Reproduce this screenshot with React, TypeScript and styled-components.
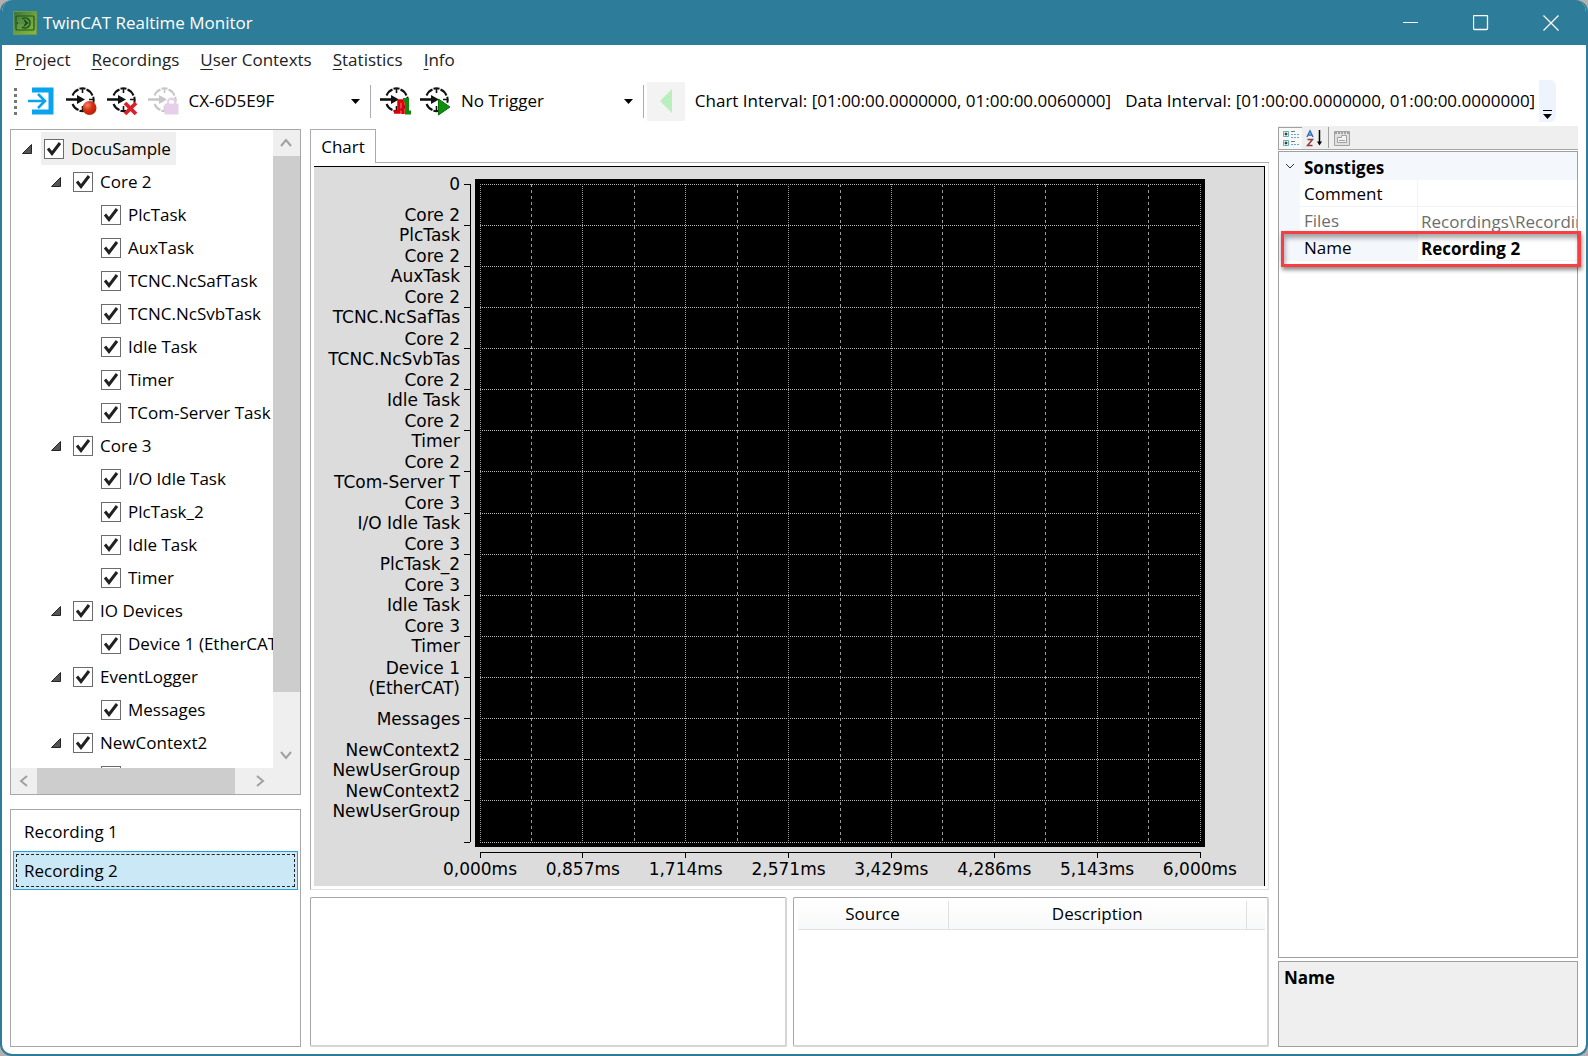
import React, { useState } from "react";
import styled, { createGlobalStyle, css } from "styled-components";

const Global = createGlobalStyle`
  * { box-sizing: border-box; }
  html, body, #root { height: 100%; margin: 0; }
  body { background: #b4b0b0; overflow: hidden; }
  body, button, input, select, table {
    font-family: "Open Sans", "Noto Sans", sans-serif;
    font-size: 17px;
    line-height: 24px;
    color: #000;
  }
  button { background: none; border: 0; padding: 0; }
`;

const Window = styled.div`
  height: 100%;
  display: flex;
  flex-direction: column;
  background: #fff;
  border: 2px solid #2d7c99;
  border-top: 0;
  border-radius: 12px;
  overflow: hidden;
`;

const TitleBar = styled.header`
  flex: none;
  height: 45px;
  display: flex;
  align-items: center;
  gap: 6px;
  padding-left: 11px;
  background: #2d7c99;
  color: #fff;
`;

const Title = styled.h1`
  flex: 1;
  margin: 0;
  font-size: 17px;
  font-weight: 400;
`;

const WindowControls = styled.div`
  display: flex;
`;

const WindowButton = styled.button`
  width: 70px;
  height: 45px;
  display: grid;
  place-items: center;
`;

const MenuBar = styled.nav`
  flex: none;
  height: 30px;
  display: flex;
  align-items: center;
  gap: 21px;
  padding: 0 13px;
`;

const MenuItem = styled.button`
  color: #222;
  u { text-underline-offset: 3px; text-decoration-thickness: 1px; }
`;

const Toolbar = styled.div`
  flex: none;
  height: 51px;
  display: flex;
  align-items: center;
  padding: 1px 30px 0 12px;
`;

const Grip = styled.span`
  width: 3px;
  height: 27px;
  margin-right: 4px;
  background: repeating-linear-gradient(#777 0 3px, transparent 3px 6px);
`;

const ToolButton = styled.button`
  width: 41px;
  height: 40px;
  display: grid;
  place-items: center;
`;

const Separator = styled.span<{ $gap: number }>`
  width: 1px;
  height: 33px;
  margin-right: ${(p) => p.$gap}px;
  background: #a8acb8;
`;

const SelectBox = styled.div<{ $width: number }>`
  display: grid;
  align-items: center;
  width: ${(p) => p.$width}px;
  margin-left: 1px;
  > * { grid-area: 1 / 1; }
  svg { justify-self: end; margin-right: 10px; pointer-events: none; }
`;

const Select = styled.select`
  appearance: none;
  width: 100%;
  height: 38px;
  padding: 0 22px 0 4px;
  border: 0;
  background: transparent;
`;

const BackButton = styled.button`
  width: 38px;
  height: 39px;
  display: grid;
  place-items: center;
  background: #f3f3f3;
`;

const Interval = styled.span`
  margin-left: 10px;
  margin-right: 4px;
  white-space: nowrap;
`;

const Overflow = styled.button`
  width: 17px;
  height: 42px;
  margin-left: auto;
  display: flex;
  align-items: flex-end;
  justify-content: center;
  padding-bottom: 3px;
  background: #edf4fd;
  border-radius: 0 6px 6px 0;
`;

const Body = styled.main`
  flex: 1;
  min-height: 0;
  display: grid;
  grid-template-columns: 291px minmax(0, 1fr) 300px;
  gap: 9px;
  padding: 0 8px 7px;
`;

const Column = styled.div<{ $gap: number }>`
  min-height: 0;
  min-width: 0;
  display: flex;
  flex-direction: column;
  gap: ${(p) => p.$gap}px;
  padding-top: 3px;
`;

const TreePanel = styled.section`
  flex: 1;
  min-height: 0;
  display: grid;
  grid-template: minmax(0, 1fr) 26px / minmax(0, 1fr) 27px;
  border: 1px solid #a5a7aa;
  background: #fff;
`;

const Tree = styled.ul`
  margin: 0;
  padding: 2px 0 0 5px;
  list-style: none;
  overflow: hidden;
`;

const Node = styled.li<{ $depth: number }>`
  height: 33px;
  display: flex;
  align-items: center;
  padding-left: ${(p) => p.$depth * 28 + (p.$depth ? 1 : 0)}px;
`;

const Expander = styled.button`
  flex: none;
  width: 22px;
  height: 24px;
  display: flex;
  align-items: center;
  justify-content: center;
`;

const NodeLabel = styled.label<{ $selected: boolean }>`
  height: 33px;
  display: flex;
  align-items: center;
  gap: 7px;
  margin-left: 3px;
  padding: 0 5px 0 3px;
  white-space: nowrap;
  background: ${(p) => (p.$selected ? "#efefef" : "transparent")};
`;

const CheckBox = styled.span`
  display: grid;
  width: 20px;
  height: 20px;
  > * { grid-area: 1 / 1; }
  svg { pointer-events: none; z-index: 1; }
  input {
    appearance: none;
    width: 20px;
    height: 20px;
    margin: 0;
    border: 1px solid #6c6c6c;
    background: #fff;
  }
  input:not(:checked) + svg { visibility: hidden; }
`;

const Scroll = styled.div<{ $horizontal?: boolean }>`
  display: flex;
  flex-direction: ${(p) => (p.$horizontal ? "row" : "column")};
  background: #efefef;
`;

const ScrollButton = styled.button`
  flex: none;
  width: 26px;
  height: 26px;
  display: grid;
  place-items: center;
`;

const Thumb = styled.span<{ $grow: number }>`
  flex: ${(p) => p.$grow} 0 0;
  background: #cdcdcd;
`;

const Track = styled.span<{ $grow: number }>`
  flex: ${(p) => p.$grow} 0 0;
`;

const ScrollCorner = styled.span`
  background: #efefef;
`;

const Recordings = styled.ul`
  flex: none;
  height: 238px;
  margin: 0;
  padding: 2px;
  list-style: none;
  border: 1px solid #a5a7aa;
`;

const RecordingItem = styled.button<{ $selected: boolean }>`
  width: 100%;
  height: 39px;
  padding: 2px;
  display: flex;
  border: 1px solid transparent;
  ${(p) =>
    p.$selected &&
    css`
      background: #cbe8f6;
      border-color: #26a0da;
    `}
`;

const FocusFrame = styled.span<{ $visible: boolean }>`
  flex: 1;
  height: 33px;
  padding: 4px 0 0 7px;
  text-align: left;
  border: 1px ${(p) => (p.$visible ? "dashed #222" : "solid transparent")};
`;

const ChartSection = styled.section`
  flex: 1;
  min-height: 0;
  display: flex;
  flex-direction: column;
`;

const TabRow = styled.div`
  flex: none;
  height: 34px;
  display: flex;
  &::after {
    content: "";
    flex: 1;
    border-bottom: 1px solid #acacac;
  }
`;

const Tab = styled.button`
  width: 66px;
  border: 1px solid #acacac;
  border-bottom: 0;
  background: #fff;
`;

const TabPane = styled.div`
  flex: 1;
  min-height: 0;
  padding: 3px;
  display: flex;
  border: 1px solid #e3e3e3;
  border-left-color: #acacac;
  border-top: 0;
`;

const Chart = styled.div`
  flex: 1;
  display: grid;
  grid-template: 12px minmax(0, 1fr) 39px / 161px minmax(0, 1fr) 59px;
  background: #dcdcdc;
  border-top: 1px solid #000;
  border-right: 1px solid #000;
  font-family: "DejaVu Sans", sans-serif;
  font-size: 17px;
  line-height: 20px;
`;

const YAxis = styled.div`
  grid-area: 2 / 1;
  display: grid;
  grid-template-columns: minmax(0, 1fr) 6px;
  gap: 4px;
  padding: 5px 5px 5px 0;
`;

const YLabels = styled.div`
  display: flex;
  flex-direction: column;
`;

const YSlot = styled.div`
  flex: 1 1 0;
`;

const YLabel = styled.div`
  height: 0;
  display: flex;
  align-items: center;
  justify-content: flex-end;
  text-align: right;
  white-space: pre;
`;

const Drawing = styled.svg`
  display: block;
  width: 100%;
  height: 100%;
  overflow: visible;
  shape-rendering: crispEdges;
`;

const Plot = styled.div`
  grid-area: 2 / 2;
  padding: 5px;
  background: #000;
`;

const XAxis = styled.div`
  grid-area: 3 / 2;
  padding: 5px 5px 0;
  display: grid;
  grid-template-rows: 6px 20px;
  row-gap: 1px;
`;

const XLabels = styled.div`
  display: flex;
  justify-content: space-between;
`;

const XLabel = styled.span`
  width: 0;
  display: flex;
  justify-content: center;
`;

const BottomRow = styled.div`
  flex: none;
  height: 150px;
  display: grid;
  grid-template-columns: 1fr 1fr;
  gap: 6px;
`;

const Panel = styled.section`
  padding: 3px 2px 0 4px;
  border: 2px solid #d5d5d5;
  border-top: 1px solid #a5a7aa;
  border-left: 1px solid #a5a7aa;
  border-radius: 2px;
`;

const EventTable = styled.table`
  width: 100%;
  table-layout: fixed;
  border-collapse: separate;
  border-spacing: 0;
  th, td {
    height: 29px;
    padding: 0 0 2px;
    font-weight: 400;
    background: linear-gradient(#fff, #f7f8f9);
    border-bottom: 1px solid #e3e4e6;
  }
  th { border-right: 1px solid #dfe0e2; }
`;

const PropertyTools = styled.div`
  flex: none;
  height: 24px;
  margin-bottom: 1px;
  display: flex;
  align-items: center;
  background: #efefef;
  border-bottom: 1px solid #a5a5a5;
`;

const PropertyTool = styled.button<{ $pressed?: boolean }>`
  width: 24px;
  height: 22px;
  display: grid;
  place-items: center;
  ${(p) =>
    p.$pressed &&
    css`
      background: #f8f8f8;
      border-left: 1px solid #a0a0a0;
      border-top: 1px solid #a0a0a0;
    `}
`;

const ToolDivider = styled.span`
  width: 1px;
  height: 21px;
  margin: 0 1px 0 2px;
  background: #a0a0a0;
`;

const PropertyColumn = styled.aside`
  min-height: 0;
  min-width: 0;
  display: flex;
  flex-direction: column;
`;

const PropertyBox = styled.div`
  flex: 1;
  min-height: 0;
  border: 1px solid #a0a0a0;
  background: #fff;
`;

const PropertyTable = styled.table`
  width: 100%;
  table-layout: fixed;
  border-collapse: separate;
  border-spacing: 0;
  th, td { height: 27px; padding: 0; text-align: left; font-weight: 400; }
`;

const GroupRow = styled.tr`
  background: #f4f7fc;
  th:last-child { font-weight: 700; padding: 4px 0 0 4px; }
`;

const Gutter = styled.td`
  background: #f4f7fc;
`;

const PropertyName = styled.th<{ $selected?: boolean; $muted?: boolean }>`
  && { padding: 2px 0 0 4px; }
  color: ${(p) => (p.$muted ? "#6d6d6d" : "#000")};
  background: ${(p) => (p.$selected ? "#f4f7fc" : "#fff")};
  border-right: 1px solid #f0f3fa;
  border-bottom: 1px solid #f0f3fa;
`;

const PropertyValue = styled.td`
  border-bottom: 1px solid #f0f3fa;
`;

const ValueInput = styled.input<{ $bold?: boolean }>`
  display: block;
  width: 100%;
  height: 26px;
  padding: 2px 0 0 3px;
  border: 0;
  outline: 0;
  background: transparent;
  font-weight: ${(p) => (p.$bold ? 700 : 400)};
  &:read-only { color: #6d6d6d; }
`;

const SelectedRow = styled.tr`
  position: relative;
`;

const Highlight = styled.span`
  position: absolute;
  top: -3px;
  left: 2px;
  right: -4px;
  bottom: -6px;
  border: 3px solid #f73e42;
  box-shadow: 1px 3px 4px rgba(0, 0, 0, 0.45), inset 1px 4px 5px rgba(0, 0, 0, 0.35);
  pointer-events: none;
`;

const Help = styled.div`
  flex: none;
  height: 86px;
  margin-top: 3px;
  padding: 4px 5px;
  border: 1px solid #a0a0a0;
  background: #efefef;
  font-weight: 700;
`;

const AppIcon = () => (
  <svg width="24" height="24" viewBox="0 0 24 24" fill="none">
    <defs>
      <linearGradient id="leaf" x1="0" y1="0" x2="1" y2="1">
        <stop offset="0" stopColor="#3c7038" />
        <stop offset=".5" stopColor="#69a038" />
        <stop offset="1" stopColor="#8aba3c" />
      </linearGradient>
    </defs>
    <rect x=".5" y=".5" width="23" height="23" fill="url(#leaf)" stroke="#6f9a4a" />
    <rect x="3" y="5" width="18" height="14" rx="1" stroke="#1c5425" strokeWidth="1.2" />
    <path d="M9 8a5 5 0 1 1 0 8" stroke="#1c5425" strokeWidth="1.6" />
    <path d="M4 12h10M11 9l3.500 3-3.500 3" stroke="#1c5425" strokeWidth="1.8" />
    <path d="M5 12h7" stroke="#b5d694" strokeWidth=".8" />
  </svg>
);

const LoginIcon = () => (
  <svg width="28" height="28" viewBox="0 0 28 28" fill="none" stroke="#0aa3ee">
    <path d="M5 3h19v22H5" strokeWidth="5" />
    <path d="M1 14h17M11 7l7 7-7 7" strokeWidth="2.5" />
  </svg>
);

const Clock = ({ color = "#111", children }: { color?: string; children: React.ReactNode }) => (
  <svg width="31" height="30" viewBox="0 0 31 30" fill="none">
    <path
      d="M6.500 9.500A11 11 0 0 1 12.500 3.500M13.500 2.700A11.500 11.500 0 0 1 19.500 2.700M20.500 3.500A11 11 0 0 1 26.500 9.500M27.300 10.700A11.500 11.500 0 0 1 27.300 16.800M26 19A11 11 0 0 1 20.500 24M19.500 24.800A11.500 11.500 0 0 1 13.500 24.800M12.500 24A11 11 0 0 1 6.500 18"
      stroke={color}
      strokeWidth="2"
    />
    <path d="M16.500 2v5M16.500 20v5M23 13.500h4" stroke={color} strokeWidth="1.6" />
    <path d="M0 13.500h12" stroke={color} strokeWidth="2.600" />
    <path d="M11 9 19 13.500l-8 4.500z" fill={color} />
    {children}
  </svg>
);

const RecordIcon = () => (
  <Clock>
    <defs>
      <radialGradient id="dot" cx=".35" cy=".3" r=".75">
        <stop offset="0" stopColor="#f08468" />
        <stop offset=".5" stopColor="#d62d10" />
        <stop offset="1" stopColor="#b52008" />
      </radialGradient>
    </defs>
    <circle cx="23.500" cy="22" r="7" fill="url(#dot)" />
  </Clock>
);

const DeleteIcon = () => (
  <Clock>
    <path d="m18 17 11 11M29 17 18 28" stroke="#dc1f28" strokeWidth="3.800" />
  </Clock>
);

const LockedIcon = () => (
  <Clock color="#c6c6c6">
    <path d="M20 19v-3a3.500 3.500 0 0 1 7 0v3" stroke="#e6cfe9" strokeWidth="2" />
    <path d="M16.500 17.500h14v11h-14z" fill="#e6cfe9" />
  </Clock>
);

const PulseIcon = () => (
  <Clock>
    <path d="M14 26h5V15h4v13" stroke="#dc0008" strokeWidth="3.500" />
    <path d="M23 14h4v12.500h4" stroke="#0d8a0d" strokeWidth="4" />
  </Clock>
);

const PlayIcon = () => (
  <Clock>
    <path d="M18.500 13 30 21l-11.500 8z" fill="#0f8f10" stroke="#077007" />
  </Clock>
);

const DropArrow = () => (
  <svg width="9" height="5" viewBox="0 0 9 5">
    <path d="M0 0h9L4.500 5z" />
  </svg>
);

const chevrons = {
  up: "M2 10l5-6 5 6",
  down: "M2 4l5 6 5-6",
  left: "M10 2L4 7l6 5",
  right: "M4 2l6 5-6 5",
};

const Chevron = ({ to }: { to: keyof typeof chevrons }) => (
  <svg width="14" height="14" viewBox="0 0 14 14" fill="none" stroke="#a0a0a0" strokeWidth="2">
    <path d={chevrons[to]} />
  </svg>
);

const CategorizedIcon = () => (
  <svg width="18" height="18" viewBox="0 0 18 18" fill="none">
    <path d="M1.500 2.500h5v5h-5zM1.500 11.500h5v5h-5z" fill="#fff" stroke="#59b5b5" />
    <path d="M2.500 5h3M4 3.500v3M2.500 14h3M4 12.500v3" stroke="#000" />
    <path d="M9 2.500h4M9 12.500h4" stroke="#777" />
    <path d="M9 5.500h8M9 8.500h8M9 15.500h8" stroke="#65a8d8" strokeDasharray="2 1" />
  </svg>
);

const SortIcon = () => (
  <svg width="18" height="18" viewBox="0 0 18 18" fill="none">
    <path d="M2 8l3-6 3 6M3 6h4" stroke="#2d6ec4" strokeWidth="1.5" />
    <path d="M2.500 10.500h5l-5 6h5" stroke="#923d3d" strokeWidth="1.5" />
    <path d="M14.500 1v13" stroke="#000" strokeWidth="1.5" />
    <path d="M12 12.500h5l-2.500 4z" fill="#000" />
  </svg>
);

const PagesIcon = () => (
  <svg width="18" height="18" viewBox="0 0 18 18" fill="none" stroke="#a2a2a2">
    <path d="M1.500 2.500h15v14h-15z" fill="#e0e0e0" />
    <path d="M2 4h14" strokeWidth="2" strokeDasharray="2 1" />
    <path d="M4.500 8.500h4v-2h5v7h-9z" fill="#f2f2f2" />
    <path d="M6 11.500h6" />
  </svg>
);

type TreeRow = [depth: number, name: string, leaf?: boolean];

const tree: TreeRow[] = [
  [0, "DocuSample"],
  [1, "Core 2"],
  [2, "PlcTask", true],
  [2, "AuxTask", true],
  [2, "TCNC.NcSafTask", true],
  [2, "TCNC.NcSvbTask", true],
  [2, "Idle Task", true],
  [2, "Timer", true],
  [2, "TCom-Server Task", true],
  [1, "Core 3"],
  [2, "I/O Idle Task", true],
  [2, "PlcTask_2", true],
  [2, "Idle Task", true],
  [2, "Timer", true],
  [1, "IO Devices"],
  [2, "Device 1 (EtherCAT)", true],
  [1, "EventLogger"],
  [2, "Messages", true],
  [1, "NewContext2"],
  [2, "", true],
];

const yLabels = [
  "0",
  "Core 2\nPlcTask",
  "Core 2\nAuxTask",
  "Core 2\nTCNC.NcSafTas",
  "Core 2\nTCNC.NcSvbTas",
  "Core 2\nIdle Task",
  "Core 2\nTimer",
  "Core 2\nTCom-Server T",
  "Core 3\nI/O Idle Task",
  "Core 3\nPlcTask_2",
  "Core 3\nIdle Task",
  "Core 3\nTimer",
  "Device 1\n(EtherCAT)",
  "Messages",
  "NewContext2\nNewUserGroup",
  "NewContext2\nNewUserGroup",
];

const xLabels = ["0,000ms", "0,857ms", "1,714ms", "2,571ms", "3,429ms", "4,286ms", "5,143ms", "6,000ms"];

const menus = ["Project", "Recordings", "User Contexts", "Statistics", "Info"];

const steps = (count: number) => Array.from({ length: count + 1 }, (_, i) => `${(i * 100) / count}%`);

const ChartView = () => (
  <Chart>
    <YAxis>
      <YLabels>
        {yLabels.map((text, i) => (
          <YSlot key={i}>
            <YLabel>{text}</YLabel>
          </YSlot>
        ))}
      </YLabels>
      <Drawing stroke="#000">
        <line x1="100%" x2="100%" y1="0" y2="100%" />
        {steps(16).map((y) => (
          <line key={y} x1="0" x2="100%" y1={y} y2={y} />
        ))}
      </Drawing>
    </YAxis>
    <Plot>
      <Drawing>
        {steps(16).map((y) => (
          <line key={y} x1="0" x2="100%" y1={y} y2={y} stroke="#b8b8b8" strokeDasharray="1 1" />
        ))}
        {steps(14).map((x, i) => (
          <line key={x} x1={x} x2={x} y1="0" y2="100%" stroke="#9a9a9a" strokeDasharray={i % 2 ? "3 3" : "1 1"} />
        ))}
      </Drawing>
    </Plot>
    <XAxis>
      <Drawing stroke="#000">
        <line x1="0" x2="100%" y1="0" y2="0" />
        {steps(7).map((x) => (
          <line key={x} x1={x} x2={x} y1="0" y2="100%" />
        ))}
      </Drawing>
      <XLabels>
        {xLabels.map((text) => (
          <XLabel key={text}>{text}</XLabel>
        ))}
      </XLabels>
    </XAxis>
  </Chart>
);

const TreeView = () => (
  <TreePanel>
    <Tree>
      {tree.map(([depth, name, leaf], i) => (
        <Node key={i} $depth={depth}>
          <Expander as={leaf ? "span" : "button"} aria-label={leaf ? undefined : "Collapse"}>
            {!leaf && (
              <svg width="10" height="10" viewBox="0 0 10 10">
                <path d="M9.500.500v9H.500z" fill="#555" stroke="#262626" />
              </svg>
            )}
          </Expander>
          <NodeLabel $selected={i === 0}>
            <CheckBox>
              <input type="checkbox" defaultChecked />
              <svg width="20" height="20" viewBox="0 0 20 20" fill="none">
                <path d="M4 9.500l4 5L16 4" stroke="#212121" strokeWidth="3" />
              </svg>
            </CheckBox>
            {name}
          </NodeLabel>
        </Node>
      ))}
    </Tree>
    <Scroll>
      <ScrollButton aria-label="Scroll up"><Chevron to="up" /></ScrollButton>
      <Thumb $grow={536} />
      <Track $grow={50} />
      <ScrollButton aria-label="Scroll down"><Chevron to="down" /></ScrollButton>
    </Scroll>
    <Scroll $horizontal>
      <ScrollButton aria-label="Scroll left"><Chevron to="left" /></ScrollButton>
      <Thumb $grow={198} />
      <Track $grow={12} />
      <ScrollButton aria-label="Scroll right"><Chevron to="right" /></ScrollButton>
    </Scroll>
    <ScrollCorner />
  </TreePanel>
);

const Properties = ({ name }: { name: string }) => (
  <PropertyColumn>
    <PropertyTools>
      <PropertyTool $pressed aria-label="Categorized"><CategorizedIcon /></PropertyTool>
      <PropertyTool aria-label="Alphabetical"><SortIcon /></PropertyTool>
      <ToolDivider />
      <PropertyTool disabled aria-label="Property pages"><PagesIcon /></PropertyTool>
    </PropertyTools>
    <PropertyBox>
      <PropertyTable>
        <colgroup>
          <col width="21" />
          <col width="118" />
          <col />
        </colgroup>
        <tbody>
          <GroupRow>
            <th>
              <Expander aria-label="Collapse group">
                <svg width="10" height="6" viewBox="0 0 10 6" fill="none" stroke="#333">
                  <path d="M1 1l4 4 4-4" />
                </svg>
              </Expander>
            </th>
            <th colSpan={2}>Sonstiges</th>
          </GroupRow>
          <tr>
            <Gutter />
            <PropertyName><label htmlFor="comment">Comment</label></PropertyName>
            <PropertyValue><ValueInput id="comment" /></PropertyValue>
          </tr>
          <tr>
            <Gutter />
            <PropertyName $muted><label htmlFor="files">Files</label></PropertyName>
            <PropertyValue><ValueInput id="files" readOnly value="Recordings\Recording 2" /></PropertyValue>
          </tr>
          <SelectedRow>
            <Gutter />
            <PropertyName $selected><label htmlFor="name">Name</label></PropertyName>
            <PropertyValue>
              <ValueInput key={name} id="name" $bold defaultValue={name} />
              <Highlight />
            </PropertyValue>
          </SelectedRow>
        </tbody>
      </PropertyTable>
    </PropertyBox>
    <Help>Name</Help>
  </PropertyColumn>
);

export default function App() {
  const [recording, setRecording] = useState("Recording 2");

  return (
    <>
      <Global />
      <Window>
        <TitleBar>
          <AppIcon />
          <Title>TwinCAT Realtime Monitor</Title>
          <WindowControls>
            <WindowButton aria-label="Minimize">
              <svg width="16" height="16" stroke="#fff"><path d="M0 7.500h15" /></svg>
            </WindowButton>
            <WindowButton aria-label="Maximize">
              <svg width="16" height="16" fill="none" stroke="#fff"><rect x=".5" y=".5" width="14" height="14" rx="1" strokeWidth="1.3" /></svg>
            </WindowButton>
            <WindowButton aria-label="Close">
              <svg width="16" height="16" stroke="#fff"><path d="M.5.500l15 15M15.500.500l-15 15" strokeWidth="1.3" /></svg>
            </WindowButton>
          </WindowControls>
        </TitleBar>
        <MenuBar>
          {menus.map((menu) => (
            <MenuItem key={menu}><u>{menu[0]}</u>{menu.slice(1)}</MenuItem>
          ))}
        </MenuBar>
        <Toolbar>
          <Grip />
          <ToolButton aria-label="Connect"><LoginIcon /></ToolButton>
          <ToolButton aria-label="Start recording"><RecordIcon /></ToolButton>
          <ToolButton aria-label="Delete recording"><DeleteIcon /></ToolButton>
          <ToolButton aria-label="Locked" disabled><LockedIcon /></ToolButton>
          <SelectBox $width={187}>
            <Select aria-label="Target system"><option>CX-6D5E9F</option></Select>
            <DropArrow />
          </SelectBox>
          <Separator $gap={4} />
          <ToolButton aria-label="Edit trigger"><PulseIcon /></ToolButton>
          <ToolButton aria-label="Start trigger"><PlayIcon /></ToolButton>
          <SelectBox $width={188}>
            <Select aria-label="Trigger"><option>No Trigger</option></Select>
            <DropArrow />
          </SelectBox>
          <Separator $gap={3} />
          <BackButton aria-label="Previous" disabled>
            <svg width="12" height="24" viewBox="0 0 12 24"><path d="M12 0v24L0 12z" fill="#b9efbd" /></svg>
          </BackButton>
          <Interval>Chart Interval: [01:00:00.0000000, 01:00:00.0060000]</Interval>
          <Interval>Data Interval: [01:00:00.0000000, 01:00:00.0000000]</Interval>
          <Overflow aria-label="Toolbar options">
            <svg width="9" height="9" viewBox="0 0 9 9"><path d="M0 0h9v1H0zM0 4h9L4.500 9z" /></svg>
          </Overflow>
        </Toolbar>
        <Body>
          <Column $gap={14}>
            <TreeView />
            <Recordings>
              {["Recording 1", "Recording 2"].map((item) => (
                <li key={item}>
                  <RecordingItem $selected={item === recording} onClick={() => setRecording(item)}>
                    <FocusFrame $visible={item === recording}>{item}</FocusFrame>
                  </RecordingItem>
                </li>
              ))}
            </Recordings>
          </Column>
          <Column $gap={7}>
            <ChartSection>
              <TabRow><Tab>Chart</Tab></TabRow>
              <TabPane><ChartView /></TabPane>
            </ChartSection>
            <BottomRow>
              <Panel />
              <Panel>
                <EventTable>
                  <colgroup><col width="151" /><col /><col width="18" /></colgroup>
                  <thead><tr><th>Source</th><th>Description</th><td /></tr></thead>
                </EventTable>
              </Panel>
            </BottomRow>
          </Column>
          <Properties name={recording} />
        </Body>
      </Window>
    </>
  );
}
